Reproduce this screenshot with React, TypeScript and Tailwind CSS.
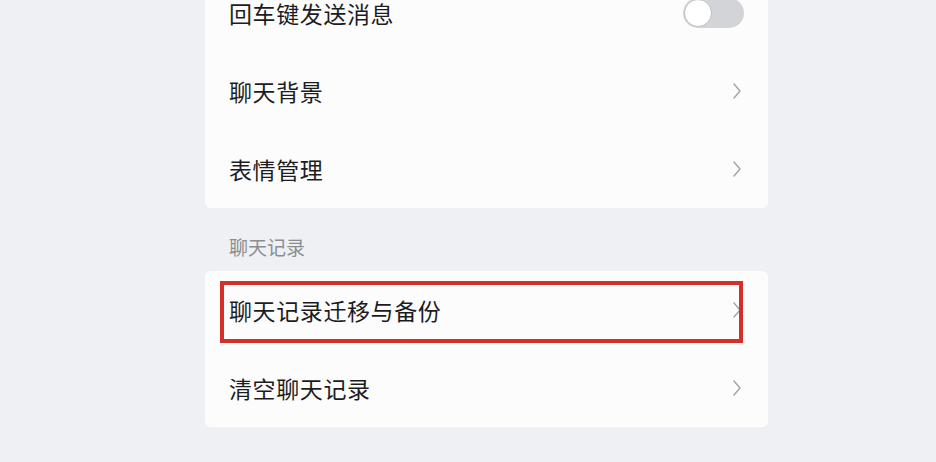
import { ReactNode } from "react";

const FONT = { fontFamily: '"Noto Sans CJK SC", "Noto Sans", sans-serif' };

function Chevron() {
  return (
    <svg width="10" height="18" viewBox="0 0 10 18" fill="none" className="shrink-0">
      <polyline points="2,2 8,9 2,16" stroke="#a3a3a6" strokeWidth="1.4" strokeLinecap="round" strokeLinejoin="round" />
    </svg>
  );
}

function Toggle() {
  return (
    <div className="relative w-[61px] h-[30px] rounded-full bg-[#d3d4d7] shrink-0 -mr-[2px]">
      <div className="absolute left-[1px] top-[1px] h-[28px] w-[28px] rounded-full bg-white border border-[#bfc0c3]" />
    </div>
  );
}

function Row({ label, right, children }: { label: string; right: ReactNode; children?: ReactNode }) {
  return (
    <div className="relative h-[78px] flex items-center justify-between pl-[24px] pr-[26px]">
      <span className="text-[23px] text-[#1c1c1f] tracking-[0.6px]">{label}</span>
      {right}
      {children}
    </div>
  );
}

export default function App() {
  return (
    <div className="w-[936px] h-[462px] overflow-hidden bg-[#eef0f3]" style={FONT}>
      <div className="ml-[205px] w-[563px] -mt-[26px] bg-[#fcfcfd] rounded-[6px]">
        <Row label="回车键发送消息" right={<Toggle />} />
        <Row label="聊天背景" right={<Chevron />} />
        <Row label="表情管理" right={<Chevron />} />
      </div>
      <div className="ml-[205px] h-[63px] pl-[24px] pt-[26px] text-[19px] leading-[26px] text-[#8c8d90]">聊天记录</div>
      <div className="ml-[205px] w-[563px] bg-[#fcfcfd] rounded-[6px]">
        <Row label="聊天记录迁移与备份" right={<Chevron />}>
          <div className="absolute left-[15px] right-[25px] top-[10px] bottom-[6px] border-[4px] border-[#d52f2c]" />
        </Row>
        <Row label="清空聊天记录" right={<Chevron />} />
      </div>
    </div>
  );
}
